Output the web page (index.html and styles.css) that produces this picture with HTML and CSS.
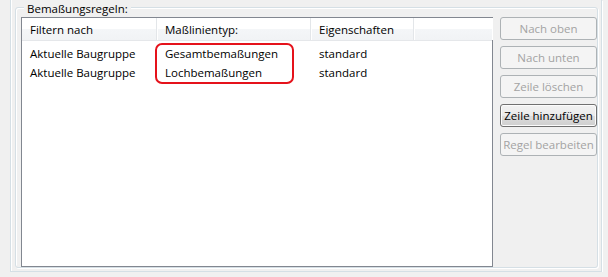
FILE: index.html
```html
<!DOCTYPE html>
<html>

<head>
    <link rel="stylesheet" href="styles.css">
</head>

<body>
    <div class="panel">
        <div class="group">
            <span class="group-label">Bemaßungsregeln:</span>

            <div class="list">
                <div class="list-head">
                    <div class="cell col1">Filtern nach</div>
                    <div class="cell col2">Maßlinientyp:</div>
                    <div class="cell col3">Eigenschaften</div>
                    <div class="cell filler"></div>
                </div>
                <div class="list-body">
                    <div class="row">
                        <div class="cell col1">Aktuelle Baugruppe</div>
                        <div class="cell col2">Gesamtbemaßungen</div>
                        <div class="cell col3">standard</div>
                    </div>
                    <div class="row">
                        <div class="cell col1">Aktuelle Baugruppe</div>
                        <div class="cell col2">Lochbemaßungen</div>
                        <div class="cell col3">standard</div>
                    </div>
                    <!-- red marking round the two types -->
                    <div class="mark"></div>
                </div>
            </div>

            <div class="buttons">
                <button type="button" class="btn" disabled>Nach oben</button>
                <button type="button" class="btn" disabled>Nach unten</button>
                <button type="button" class="btn" disabled>Zeile löschen</button>
                <button type="button" class="btn active">Zeile hinzufügen</button>
                <button type="button" class="btn" disabled>Regel bearbeiten</button>
            </div>
        </div>
    </div>
</body>

</html>
```

FILE: styles.css
```css
body {
    margin: 0;
    background-color: #f0f0f0;
    font-family: "Open Sans", "Noto Sans", sans-serif;
    font-size: 11.5px;
    color: #000;
}

/* outer etched frame, top edge is cut off */
.panel {
    width: 592px;
    height: 272px;
    margin-left: 10px;
    border: 1px solid #d5dfe5;
    border-top: none;
    box-shadow: 1px 1px 0 #fff, inset 1px 0 0 #fff;
    padding-left: 4px;
    padding-top: 7px;
    box-sizing: border-box;
}

.group {
    position: relative;
    width: 583px;
    height: 261px;
    box-sizing: border-box;
    border: 1px solid #d5dfe5;
    border-radius: 3px;
    box-shadow: 1px 1px 0 #fff, inset 1px 1px 0 #fff;
    display: flex;
    gap: 7px;
    padding: 9px 0 0 5px;
}

.group-label {
    position: absolute;
    left: 8px;
    top: -7px;
    padding: 0 3px;
    line-height: 15px;
    background-color: #f0f0f0;
}

.list {
    width: 472px;
    height: 250px;
    box-sizing: border-box;
    border: 1px solid #828790;
    background-color: #fff;
    flex-shrink: 0;
}

.list-head {
    display: flex;
    height: 23px;
    background: linear-gradient(#ffffff, #ffffff 50%, #f4f6f8 51%, #f1f3f5);
    border-bottom: 1px solid #e5e7ea;
    box-sizing: border-box;
}

.list-head .cell {
    border-right: 1px solid #e3e6e9;
    box-shadow: 1px 0 0 #fff;
    line-height: 23px;
}

.list-head .filler {
    flex: 1;
    border-right: none;
}

.cell {
    padding-left: 8px;
    box-sizing: border-box;
    white-space: nowrap;
}

.col1 {
    width: 135px;
}

.col2 {
    width: 154px;
}

.col3 {
    width: 103px;
}

.list-body {
    position: relative;
    padding-top: 3px;
}

.row {
    display: flex;
    height: 19px;
    line-height: 19px;
}

.mark {
    position: absolute;
    left: 133px;
    top: 2px;
    width: 139px;
    height: 41px;
    box-sizing: border-box;
    border: 2px solid #e5121b;
    border-radius: 7px;
}

.buttons {
    display: flex;
    flex-direction: column;
    gap: 6px;
}

.btn {
    width: 97px;
    height: 23px;
    padding: 0;
    font-family: "Open Sans", "Noto Sans", sans-serif;
    font-size: 11.5px;
    color: #a3a3a3;
    background-color: #f4f4f4;
    border: 1px solid #adb2b5;
    border-radius: 3px;
    text-align: center;
}

.active {
    color: #000;
    border-color: #707070;
    background: linear-gradient(#f2f2f2, #ebebeb 50%, #dddddd 51%, #cfcfcf);
    box-shadow: inset 0 0 0 1px #fcfcfc;
}
```
